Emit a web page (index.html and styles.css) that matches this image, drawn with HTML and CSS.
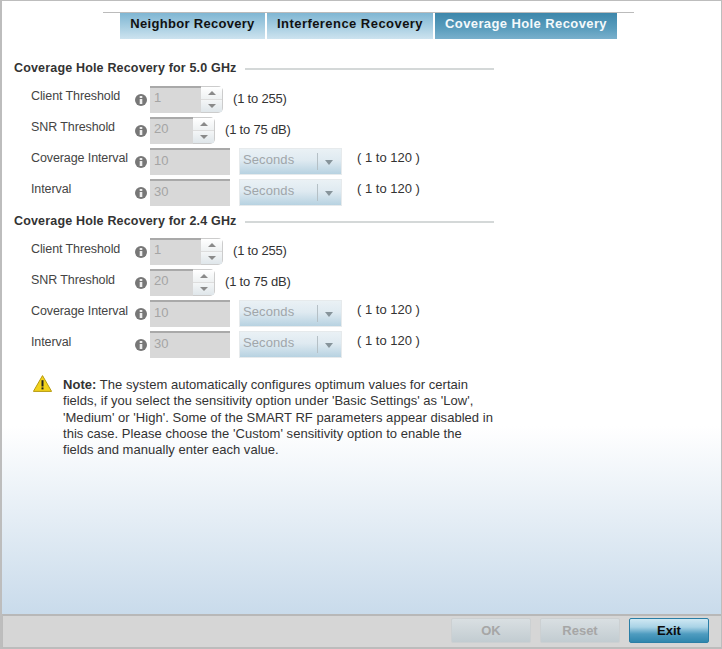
FILE: index.html
```html
<!DOCTYPE html>
<html lang="en">
<head>
<meta charset="utf-8">
<title>Coverage Hole Recovery</title>
<link rel="stylesheet" href="styles.css">
</head>
<body>
<div class="page">
  <main class="content">
    <nav class="tabbar">
      <div class="tabs">
        <div class="tab tab-one">Neighbor Recovery</div>
        <div class="tab tab-two">Interference Recovery</div>
        <div class="tab tab-active">Coverage Hole Recovery</div>
      </div>
    </nav>

    <section class="group group-first">
      <h2 class="group-title"><span>Coverage Hole Recovery for 5.0 GHz</span></h2>
      <div class="row">
        <span class="label">Client Threshold</span>
        <svg class="info" viewBox="0 0 12 12"><circle cx="6" cy="6" r="6" fill="#777"/><rect x="4.7" y="5" width="2.6" height="5" fill="#eee"/><rect x="4.7" y="2" width="2.6" height="2" fill="#eee"/></svg>
        <div class="spin spin-wide"><span class="val">1</span><span class="arrows"><i class="up"></i><i class="down"></i></span></div>
        <span class="hint">(1 to 255)</span>
      </div>
      <div class="row">
        <span class="label">SNR Threshold</span>
        <svg class="info" viewBox="0 0 12 12"><circle cx="6" cy="6" r="6" fill="#777"/><rect x="4.7" y="5" width="2.6" height="5" fill="#eee"/><rect x="4.7" y="2" width="2.6" height="2" fill="#eee"/></svg>
        <div class="spin spin-narrow"><span class="val">20</span><span class="arrows"><i class="up"></i><i class="down"></i></span></div>
        <span class="hint">(1 to 75 dB)</span>
      </div>
      <div class="row">
        <span class="label">Coverage Interval</span>
        <svg class="info" viewBox="0 0 12 12"><circle cx="6" cy="6" r="6" fill="#777"/><rect x="4.7" y="5" width="2.6" height="5" fill="#eee"/><rect x="4.7" y="2" width="2.6" height="2" fill="#eee"/></svg>
        <div class="textbox"><span class="val">10</span></div>
        <div class="select"><span class="select-text">Seconds</span><i class="caret"></i></div>
        <span class="range">( 1 to 120 )</span>
      </div>
      <div class="row">
        <span class="label">Interval</span>
        <svg class="info" viewBox="0 0 12 12"><circle cx="6" cy="6" r="6" fill="#777"/><rect x="4.7" y="5" width="2.6" height="5" fill="#eee"/><rect x="4.7" y="2" width="2.6" height="2" fill="#eee"/></svg>
        <div class="textbox"><span class="val">30</span></div>
        <div class="select"><span class="select-text">Seconds</span><i class="caret"></i></div>
        <span class="range">( 1 to 120 )</span>
      </div>
    </section>

    <section class="group group-second">
      <h2 class="group-title"><span>Coverage Hole Recovery for 2.4 GHz</span></h2>
      <div class="row">
        <span class="label">Client Threshold</span>
        <svg class="info" viewBox="0 0 12 12"><circle cx="6" cy="6" r="6" fill="#777"/><rect x="4.7" y="5" width="2.6" height="5" fill="#eee"/><rect x="4.7" y="2" width="2.6" height="2" fill="#eee"/></svg>
        <div class="spin spin-wide"><span class="val">1</span><span class="arrows"><i class="up"></i><i class="down"></i></span></div>
        <span class="hint">(1 to 255)</span>
      </div>
      <div class="row">
        <span class="label">SNR Threshold</span>
        <svg class="info" viewBox="0 0 12 12"><circle cx="6" cy="6" r="6" fill="#777"/><rect x="4.7" y="5" width="2.6" height="5" fill="#eee"/><rect x="4.7" y="2" width="2.6" height="2" fill="#eee"/></svg>
        <div class="spin spin-narrow"><span class="val">20</span><span class="arrows"><i class="up"></i><i class="down"></i></span></div>
        <span class="hint">(1 to 75 dB)</span>
      </div>
      <div class="row">
        <span class="label">Coverage Interval</span>
        <svg class="info" viewBox="0 0 12 12"><circle cx="6" cy="6" r="6" fill="#777"/><rect x="4.7" y="5" width="2.6" height="5" fill="#eee"/><rect x="4.7" y="2" width="2.6" height="2" fill="#eee"/></svg>
        <div class="textbox"><span class="val">10</span></div>
        <div class="select"><span class="select-text">Seconds</span><i class="caret"></i></div>
        <span class="range">( 1 to 120 )</span>
      </div>
      <div class="row">
        <span class="label">Interval</span>
        <svg class="info" viewBox="0 0 12 12"><circle cx="6" cy="6" r="6" fill="#777"/><rect x="4.7" y="5" width="2.6" height="5" fill="#eee"/><rect x="4.7" y="2" width="2.6" height="2" fill="#eee"/></svg>
        <div class="textbox"><span class="val">30</span></div>
        <div class="select"><span class="select-text">Seconds</span><i class="caret"></i></div>
        <span class="range">( 1 to 120 )</span>
      </div>
    </section>

    <div class="note">
      <svg class="warn" viewBox="0 0 19 17"><path d="M9.5 .6 L18.6 16.4 H.4 Z" fill="#f2d21b" stroke="#b69a10" stroke-width="1" stroke-linejoin="round"/><rect x="8.5" y="5.2" width="2" height="6.3" fill="#222"/><rect x="8.5" y="12.4" width="2" height="2" fill="#222"/></svg>
      <p class="note-text"><b>Note:</b> The system automatically configures optimum values for certain fields, if you select the sensitivity option under 'Basic Settings' as 'Low', 'Medium' or 'High'. Some of the SMART RF parameters appear disabled in this case. Please choose the 'Custom' sensitivity option to enable the fields and manually enter each value.</p>
    </div>
  </main>
  <footer class="footer">
    <div class="btn btn-off">OK</div>
    <div class="btn btn-off">Reset</div>
    <div class="btn btn-exit">Exit</div>
  </footer>
</div>
</body>
</html>
```
FILE: styles.css
```css
* { box-sizing: border-box; }
html, body { margin: 0; padding: 0; height: 100%; }
body { font-family: "Liberation Sans", Arial, sans-serif; color: #333; background: #fff; overflow: hidden; }
.page { width: 722px; height: 649px; display: flex; flex-direction: column; border-top: 1px solid #bdbdbd; border-left: 2px solid #bdbdbd; border-right: 1px solid #bdbdbd; }
.content { flex: 1; background: linear-gradient(to bottom, #fff 0, #fff 425px, #c9dbeb 100%); padding-top: 11px; }
.tabbar { margin-left: 101px; width: 531px; border-top: 1px solid #bbb; padding-left: 17px; height: 27px; }
.tabs { display: flex; gap: 2px; height: 26px; }
.tab { font-size: 13px; font-weight: bold; letter-spacing: .3px; color: #111; height: 26px; line-height: 21px; text-align: center; background: linear-gradient(to bottom, #7fb6d3 0, #a9cfe2 55%, #cde3ef 100%); }
.tab-one { width: 145px; }
.tab-two { width: 166px; letter-spacing: .45px; }
.tab-active { width: 182px; color: #f4f9fb; letter-spacing: .4px; background: linear-gradient(to bottom, #3d87ab 0, #5a9dbd 60%, #79b0cc 100%); line-height: 22px; }
.group { width: 480px; margin-left: 12px; }
.group-first { padding-top: 21px; }
.group-second { margin-top: 5px; }
.group-title { margin: 0 0 8px; display: flex; align-items: center; gap: 8px; font-size: 12.5px; line-height: 16px; font-weight: bold; color: #333; letter-spacing: .17px; white-space: nowrap; }
.group-second .group-title { margin-bottom: 7px; }
.group-title::after { content: ""; flex: 1; height: 2px; margin-top: 1px; background: #d4d8d8; }
.row { display: flex; align-items: center; height: 31px; padding-left: 17px; font-size: 12.5px; }
.label { width: 104px; letter-spacing: -.1px; color: #444; position: relative; top: -4px; white-space: nowrap; }
.group-second .label { top: -3px; }
.info { width: 12px; height: 12px; flex: none; margin-right: 3px; }
.val { font-size: 13px; color: #a5a5a5; padding-left: 4px; }
.textbox { width: 80px; height: 27px; background: #d8d8d8; border-top: 2px solid #a9a9a9; display: flex; align-items: center; padding-bottom: 4px; }
.spin { height: 27px; display: flex; }
.spin .val { flex: 1; display: flex; align-items: center; background: #d8d8d8; border-top: 2px solid #a9a9a9; padding-bottom: 6px; }
.spin-wide { width: 73px; }
.spin-narrow { width: 65px; }
.arrows { width: 22px; display: flex; flex-direction: column; border: 1px solid #ccc; border-left: 0; border-radius: 0 5px 5px 0; background: #fff; }
.arrows i { flex: 1; display: flex; align-items: center; justify-content: center; }
.arrows .up { border-bottom: 1px solid #ddd; background: linear-gradient(#fff, #eef1f2); }
.arrows .down { background: linear-gradient(#f4f6f7, #dfe6ea); }
.arrows i::before { content: ""; width: 0; height: 0; border-left: 4px solid transparent; border-right: 4px solid transparent; }
.arrows .up::before { border-bottom: 4px solid #8a8a8a; }
.arrows .down::before { border-top: 4px solid #8a8a8a; }
.hint { font-size: 13px; margin-left: 10px; color: #333; letter-spacing: -.2px; position: relative; top: -1px; white-space: nowrap; }
.select { width: 103px; height: 27px; margin-left: 9px; display: flex; align-items: center; border: 1px solid #e6eaec; background: linear-gradient(to bottom, #eaf1f5 0, #dfeaf1 45%, #b7d2e1 100%); }
.select-text { width: 77px; padding: 0 0 4px 3px; font-size: 13px; color: #a0a6aa; letter-spacing: .1px; }
.caret { flex: none; position: relative; width: 24px; height: 17px; border-left: 1px solid #b5c0c6; }
.caret::after { content: ""; position: absolute; left: 7px; top: 7px; width: 0; height: 0; border-left: 4px solid transparent; border-right: 4px solid transparent; border-top: 5px solid #87949b; }
.range { margin-left: 15px; font-size: 13px; color: #333; position: relative; top: -4px; white-space: nowrap; }
.note { margin: 15px 0 0 31px; display: flex; width: 460px; gap: 11px; align-items: flex-start; }
.warn { width: 19px; height: 17px; flex: none; }
.note-text { margin: 2px 0 0; width: 430px; font-size: 13px; letter-spacing: .03px; line-height: 16.25px; color: #333; }
.footer { height: 35px; flex: none; background: #d6d6d6; border-top: 2px solid #b8b8b8; border-bottom: 2px solid #bcbcbc; border-left: 1px solid #bcbcbc; display: flex; justify-content: flex-end; gap: 9px; padding: 2px 12px 0 0; }
.btn { width: 80px; height: 25px; font-size: 13px; font-weight: bold; text-align: center; border-radius: 2px; line-height: 23px; }
.btn-off { color: #a6a6a6; background: linear-gradient(to bottom, #d9dfe2, #c2ccd1); border: 1px solid #ccd0d2; }
.btn-exit { color: #0b0b0b; background: linear-gradient(to bottom, #cfe8f3 0, #a9d3e6 35%, #4f9cc0 65%, #2f86ad 100%); border: 1px solid #2a7ea6; }
```
